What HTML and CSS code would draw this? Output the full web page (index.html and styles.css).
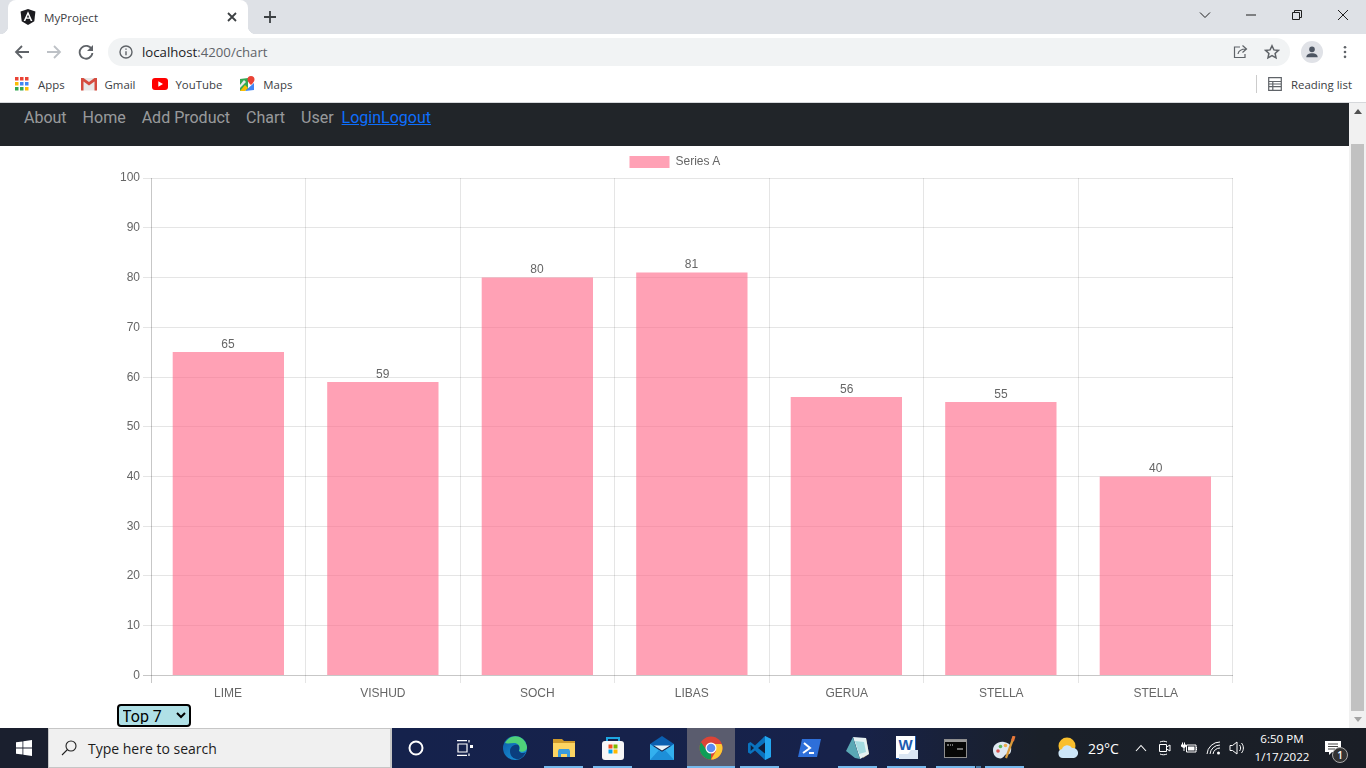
FILE: index.html
```html
<!DOCTYPE html>
<html lang="en">
<head>
<meta charset="utf-8">
<title>MyProject</title>
<link rel="stylesheet" href="styles.css">
</head>
<body>
<header class="chrome">
  <div class="tabstrip">
    <div class="tab">
      <svg class="ico16" viewBox="0 0 16 16"><path fill="#1c1c20" d="M8 0l7.400 2.600-1.100 9.700L8 16l-6.300-3.700L.6 2.600z"/><path fill="#fff" d="M8 2.200L3.600 12h1.700l.9-2.200h3.600l.9 2.200h1.700zM8 5.700l1.200 2.800H6.800z"/></svg>
      <span class="tab-title">MyProject</span>
      <svg class="tab-close" viewBox="0 0 10 10"><path d="M1 1l8 8M9 1l-8 8"/></svg>
    </div>
    <svg class="newtab" viewBox="0 0 12 12"><path d="M6 0v12M0 6h12"/></svg>
    <div class="winctl">
      <span class="winbtn"><svg viewBox="0 0 12 12"><path d="M1 3.500l5 5 5-5"/></svg></span>
      <span class="winbtn"><svg viewBox="0 0 12 12"><path d="M1 6h10"/></svg></span>
      <span class="winbtn"><svg viewBox="0 0 12 12"><path d="M1.500 3.500h7v7h-7zM3.500 3.500v-2h7v7h-2"/></svg></span>
      <span class="winbtn"><svg viewBox="0 0 12 12"><path d="M1 1l10 10M11 1L1 11"/></svg></span>
    </div>
  </div>
  <div class="toolbar">
    <svg class="navico" viewBox="0 0 16 16"><path d="M15 8H2M8 2L2 8l6 6"/></svg>
    <svg class="navico dim" viewBox="0 0 16 16"><path d="M1 8h13M8 2l6 6-6 6"/></svg>
    <svg class="navico" viewBox="0 0 16 16"><path d="M13.800 5.500A6.400 6.400 0 1 0 14.400 9"/><path class="solid" d="M15 1v6H9z"/></svg>
    <div class="omnibox">
      <svg class="info" viewBox="0 0 14 14"><circle cx="7" cy="7" r="6"/><path d="M7 6.200v4M7 3.400v1.400"/></svg>
      <span class="url"><span class="host">localhost</span>:4200/chart</span>
      <svg class="omni-share" viewBox="0 0 16 16"><path d="M8 3H2.500v10.500h10.500V10M6 10c.5-3 3-5 8-5M10.500 1.500L14.500 5l-4 3.500"/></svg>
      <svg class="omni-star" viewBox="0 0 16 16"><path d="M8 1.800l1.900 4.100 4.500.5-3.300 3 .9 4.500L8 11.600l-4 2.300.9-4.500-3.300-3 4.500-.5z"/></svg>
    </div>
    <span class="avatar"><svg viewBox="0 0 16 16"><circle cx="8" cy="5" r="3.200"/><path d="M1.500 14c0-3.200 3-4.600 6.500-4.600s6.500 1.400 6.500 4.600z"/></svg></span>
    <svg class="kebab" viewBox="0 0 4 16"><circle cx="2" cy="2.500" r="1.500"/><circle cx="2" cy="8" r="1.500"/><circle cx="2" cy="13.500" r="1.500"/></svg>
  </div>
  <div class="bookmarks">
    <span class="bm bm-apps">
      <svg class="ico14" viewBox="0 0 14 14"><path fill="#ea4335" d="M0 0h3.500v3.500H0zM5 0h3.500v3.500H5zM10 0h3.500v3.500H10z"/><path fill="#4285f4" d="M5 5h3.500v3.500H5zM10 5h3.500v3.500H10z"/><path fill="#fbbc04" d="M0 5h3.500v3.500H0z"/><path fill="#34a853" d="M0 10h3.500v3.500H0zM5 10h3.500v3.500H5z"/><path fill="#fbbc04" d="M10 10h3.500v3.500H10z"/></svg>
      Apps</span>
    <span class="bm bm-gmail">
      <svg class="ico16" viewBox="0 0 16 14"><path fill="#e8e8e8" d="M1 1h14v12.500H1z"/><path fill="#d54c3f" d="M0 1h2.500l5.500 4 5.500-4H16v12.500h-2.500V4.500L8 8.500l-5.500-4v9H0z"/></svg>
      Gmail</span>
    <span class="bm bm-yt">
      <svg class="ico16" viewBox="0 0 16 12"><rect width="16" height="12" rx="3" fill="#f00"/><path fill="#fff" d="M6.300 3.300L11 6l-4.700 2.700z"/></svg>
      YouTube</span>
    <span class="bm bm-maps">
      <svg class="ico16" viewBox="0 0 16 16"><path fill="#34a853" d="M1 3l8-1v12l-8 1z"/><path fill="#4285f4" d="M6 15l9-1V7z"/><path fill="#fbbc04" d="M1 15l5-6 3 3-3 3z"/><path fill="#e8e8e8" d="M1 9l4-5 2 2-6 6z"/><path fill="#ea4335" d="M12 0a3.500 3.500 0 0 1 3.500 3.500C15.500 6 12 9 12 9S8.500 6 8.500 3.500A3.500 3.500 0 0 1 12 0z"/></svg>
      Maps</span>
    <span class="bm-sep"></span>
    <span class="bm bm-read">
      <svg class="readico" viewBox="0 0 14 14"><path d="M.7.700h12.600v12.600H.7zM.7 4.500h12.600M.7 7h12.600M.7 9.700h12.600M4.800 4.500v8.800"/></svg>
      Reading list</span>
  </div>
</header>

<div class="viewport">
  <main class="page">
    <nav class="navbar">
      <a class="nav-link">About</a>
      <a class="nav-link">Home</a>
      <a class="nav-link">Add Product</a>
      <a class="nav-link">Chart</a>
      <a class="nav-link">User</a>
      <span class="auth"><a href="#login">Login</a><a href="#logout">Logout</a></span>
    </nav>
    <svg class="chart" viewBox="0 146 1349 557">
      <rect class="legend-box" x="629.500" y="156" width="40" height="12"/>
      <text class="lbl" x="675.500" y="165">Series A</text>
      <path class="grid" d="M143 178.500H1233M143 227.500H1233M143 277.500H1233M143 327.500H1233M143 377.500H1233M143 426.500H1233M143 476.500H1233M143 526.500H1233M143 575.500H1233M143 625.500H1233M305.500 178V683M460.500 178V683M614.500 178V683M769.500 178V683M923.500 178V683M1078.500 178V683M1232.500 178V683"/>
      <path class="axis" d="M151.500 178V683M143 675.500H1233"/>
      <g class="ylabels">
        <text x="140" y="181">100</text><text x="140" y="231">90</text><text x="140" y="281">80</text><text x="140" y="331">70</text><text x="140" y="381">60</text><text x="140" y="430">50</text><text x="140" y="480">40</text><text x="140" y="530">30</text><text x="140" y="579">20</text><text x="140" y="629">10</text><text x="140" y="679">0</text>
      </g>
      <g class="bars">
        <rect x="172.700" y="352" width="111.300" height="323"/>
        <rect x="327.200" y="382" width="111.300" height="293"/>
        <rect x="481.700" y="277.500" width="111.300" height="397.500"/>
        <rect x="636.200" y="272.500" width="111.300" height="402.500"/>
        <rect x="790.700" y="397" width="111.300" height="278"/>
        <rect x="945.200" y="402" width="111.300" height="273"/>
        <rect x="1099.700" y="476.500" width="111.300" height="198.500"/>
      </g>
      <g class="centered">
        <text x="228" y="348">65</text><text x="382.800" y="378">59</text><text x="537" y="273">80</text><text x="691.500" y="268">81</text><text x="846.800" y="393">56</text><text x="1001" y="398">55</text><text x="1155.800" y="472">40</text>
        <text x="228" y="697">LIME</text><text x="382.800" y="697">VISHUD</text><text x="537.300" y="697">SOCH</text><text x="691.800" y="697">LIBAS</text><text x="846.800" y="697">GERUA</text><text x="1001.300" y="697">STELLA</text><text x="1155.800" y="697">STELLA</text>
      </g>
    </svg>
    <div class="picker">
      <select class="top-select"><option>Top 7</option><option>Top 5</option><option>Top 3</option></select>
    </div>
  </main>
  <aside class="scrollbar">
    <span class="arrow-up"></span>
    <span class="thumb"></span>
    <span class="arrow-down"></span>
  </aside>
</div>

<footer class="taskbar">
  <span class="start"><svg viewBox="0 0 16 16"><path fill="#fff" d="M0 2.300l6.500-.9v6.200H0zM7.300 1.300L16 0v7.600H7.300zM0 8.400h6.500v6.200L0 13.700zM7.300 8.400H16V16l-8.700-1.200z"/></svg></span>
  <div class="search">
    <svg class="lens" viewBox="0 0 16 16"><circle cx="10" cy="6" r="5"/><path d="M6.500 9.500L1 15"/></svg>
    <span>Type here to search</span>
  </div>
  <div class="apps">
    <span class="app first"><svg class="ic" viewBox="0 0 16 16"><circle cx="8" cy="8" r="6.500" fill="none" stroke="#fff" stroke-width="2"/></svg></span>
    <span class="app wide"><svg class="ic" viewBox="0 0 16 16"><path fill="none" stroke="#fff" stroke-width="1.200" d="M0 .6h10M0 15.400h10M1 4h9v8H1zM12 0v2.500M12 13.500v2.500"/><path fill="#fff" d="M13 5h3v3h-3z"/></svg></span>
    <span class="app"><svg class="ic24" viewBox="0 0 24 24"><defs><linearGradient id="eg" x1="0" y1="0" x2="1" y2="1"><stop offset="0" stop-color="#0c59a4"/><stop offset="1" stop-color="#1b9de2"/></linearGradient></defs><circle cx="12" cy="12" r="12" fill="url(#eg)"/><path fill="#4fd17a" d="M2 7C6-2 21-3 24 11c.3 4-5 6-8 4 2-3 0-8-5-8-4 0-7 1-9 0z"/><path fill="#0b3e7e" d="M7 15c0-4 4-7 8-6 2 1 1 4 1 6 1 2 4 3 7 1-3 6-7 8-10 7-4-1-6-4-6-8z"/></svg></span>
    <span class="app on"><svg class="ic24" viewBox="0 0 24 24"><path fill="#cf9a2b" d="M1 3h9l2 2h11v3H1z"/><path fill="#fcd462" d="M1 7h22v14H1z"/><path fill="#3a9bdc" d="M7 13h10l1 2v6h-3v-3H9v3H6v-6z"/></svg></span>
    <span class="app on"><svg class="ic24" viewBox="0 0 24 24"><path fill="none" stroke="#1ea7e1" stroke-width="2" d="M6 7V2h12v5"/><rect x="1" y="5" width="22" height="19" rx="3" fill="#f7f7f7"/><path fill="#f25022" d="M7.500 8.500h4v4h-4z"/><path fill="#7fba00" d="M12.500 8.500h4v4h-4z"/><path fill="#00a4ef" d="M7.500 13.500h4v4h-4z"/><path fill="#ffb900" d="M12.500 13.500h4v4h-4z"/></svg></span>
    <span class="app"><svg class="ic24" viewBox="0 0 24 24"><path fill="#0a5fb0" d="M0 8l12-8 12 8v2H0z"/><path fill="#33b0ee" d="M0 8l12 8 12-8v16H0z"/><path fill="#e6f3fb" d="M4 9.500h16l-8 5z"/><path fill="#1d8fd8" d="M0 24l9-10 3 2 3-2 9 10z"/></svg></span>
    <span class="app active"><svg class="ic24" viewBox="0 0 24 24"><circle cx="12" cy="12" r="11.500" fill="#db4437"/><path fill="#0f9d58" d="M12 23.500A11.500 11.500 0 0 1 2 6.300L7.500 14l4.500 2z"/><path fill="#fcc934" d="M23.500 12a11.500 11.500 0 0 1-11.500 11.500L17 15l-5-7h10.500q1 2 1 4z"/><circle cx="12" cy="12" r="5.500" fill="#fff"/><circle cx="12" cy="12" r="4.300" fill="#5b8df0"/></svg></span>
    <span class="app on"><svg class="ic24" viewBox="0 0 24 24"><path fill="#0a73bf" d="M17 0l6 3v18l-6 3-10-9.500L2.500 18 0 16.500V7.500L2.500 6 7 9.500z"/><path fill="#23a7f0" d="M17 0l6 3v18l-6 3z"/><path fill="#0f1d3a" d="M17 6.500L10 12l7 5.500zM2.700 9v6L6 12z"/></svg></span>
    <span class="app"><svg class="ic24" viewBox="0 0 24 24"><path fill="#2e6fd9" d="M5 3h19l-4 18H1z"/><path fill="none" stroke="#fff" stroke-width="2" d="M7 7l6 5-7 5M12 17h5"/></svg></span>
    <span class="app on"><svg class="ic24" viewBox="0 0 24 24"><path fill="#c9a36a" d="M20 2l3 16-6 4z"/><path fill="#e6f2f3" d="M7 1l13 1 3 16-9 5z"/><path fill="#5aa8b5" d="M7 1L0 15l9 7 5 1c-2-7-5-14-7-22z"/><path fill="#a5dbe0" d="M9 5l9 1 2 10-7 2z"/></svg></span>
    <span class="app on"><svg class="ic24" viewBox="0 0 24 24"><path fill="#fff" d="M1 0h19v22H1z"/><path fill="#1d5bb0" d="M20 0h1v14h-1zM1 22h14v1H1z"/><path fill="#dbe6f3" d="M4 18h9l3-4h7v9H4z"/><text class="word" x="10.500" y="14">W</text></svg></span>
    <span class="app on split"><svg class="ic-cmd" viewBox="0 0 23 19"><rect x=".5" y=".5" width="22" height="18" fill="#070707" stroke="#8e8e8e"/><path fill="#9a9a9a" d="M1 1h21v2H1z"/><path stroke="#ddd" d="M3 6h2M6 6h1M8 6h1M13 10h6"/></svg></span>
    <span class="app on"><svg class="ic24" viewBox="0 0 24 24"><path fill="#dfe8f1" d="M0 14c0-5 5-9 11-8 6 1 8 4 7 9s-4 2-6 4c-2 3-4 4-7 3-3-1-5-4-5-8z"/><circle cx="5" cy="15" r="1.800" fill="#d9534f"/><circle cx="7.500" cy="10.500" r="1.800" fill="#5cb85c"/><circle cx="12.500" cy="9.500" r="1.800" fill="#f0ad4e"/><path stroke="#d89a3a" stroke-width="2.200" d="M20 3l-7 19"/><path stroke="#e8793a" stroke-width="3" d="M21 0l-1.500 5"/></svg></span>
  </div>
  <div class="tray">
    <svg class="weather" viewBox="0 0 22 22"><circle cx="10" cy="9" r="8.500" fill="#f9bf2d"/><path fill="#cde6f8" d="M6 21a4.500 4.500 0 0 1-1-8.900A5.500 5.500 0 0 1 15 11a5 5 0 0 1 2 10z"/></svg>
    <span class="temp">29°C</span>
    <svg class="chev" viewBox="0 0 12 8"><path d="M1 7l5-5.500L11 7"/></svg>
    <svg class="t-ic meet" viewBox="0 0 16 16"><path d="M2.500 4.500h7v7h-7zM9.500 7l3.500-2v6l-3.500-2M3 2c2-1 5-1 7 0M3 14c2 1 5 1 7 0"/></svg>
    <svg class="t-ic batt" viewBox="0 0 16 16"><path d="M5.500 5h9.500v7H5.500zM15 7.500h1v2h-1"/><path class="solid" d="M7 6.500h6.500v4H7zM1 2.500h1v2h1v-2h1v2h1v2L3.500 8v3H2.500V8L0 6.500v-2h1z"/></svg>
    <svg class="t-ic wifi" viewBox="0 0 16 16"><path d="M1 14A13 13 0 0 1 14 2M4 14A10 10 0 0 1 14 5M7 14A7 7 0 0 1 14 8"/><circle class="solid" cx="12.500" cy="13" r="1.500"/></svg>
    <svg class="t-ic vol" viewBox="0 0 16 16"><path d="M1 5.500h2.500L8 2v12l-4.500-3.500H1zM10.500 5c1.500 1.500 1.500 4.500 0 6M12.500 3c2.500 3 2.500 7 0 10"/></svg>
    <span class="clock"><span>6:50 PM</span><span>1/17/2022</span></span>
    <span class="notif">
      <svg viewBox="0 0 16 14"><path fill="#fff" d="M0 0h16v11H7l-3 3v-3H0z"/><path stroke="#444" d="M3 3h10M3 5.500h10M3 8h7"/></svg>
      <span class="badge">1</span>
    </span>
  </div>
</footer>
</body>
</html>
```
FILE: styles.css
```css
* { box-sizing: border-box; }
html, body { margin: 0; height: 768px; overflow: hidden; }
body { display: flex; flex-direction: column; background: #fff; font-family: "Open Sans", "Liberation Sans", sans-serif; }
svg { display: block; flex: none; }

/* browser chrome */
.chrome { height: 103px; flex: none; background: #fff; border-bottom: 1px solid #d6d8db; }
.tabstrip { height: 34px; background: #dee1e6; display: flex; align-items: center; padding-left: 8px; }
.tab { position: relative; width: 240px; height: 34px; background: #fff; border-radius: 8px 8px 0 0; display: flex; align-items: center; padding: 0 10px 0 12px; }
.tab::before, .tab::after { content: ""; position: absolute; bottom: 0; width: 8px; height: 8px; }
.tab::before { left: -8px; background: radial-gradient(circle at 0 0, #dee1e6 8px, #fff 8.500px); }
.tab::after { right: -8px; background: radial-gradient(circle at 100% 0, #dee1e6 8px, #fff 8.500px); }
.ico16 { width: 16px; height: 16px; }
.tab-title { margin-left: 8px; font-size: 11.600px; color: #3c4043; flex: 1; }
.tab-close { width: 10px; height: 10px; margin-right: 1px; fill: none; stroke: #3c4043; stroke-width: 1.800; }
.newtab { width: 12px; height: 12px; margin-left: 16px; fill: none; stroke: #3c4043; stroke-width: 1.800; }
.winctl { margin-left: auto; display: flex; }
.winbtn { width: 46px; height: 30px; display: flex; align-items: center; justify-content: center; margin-top: -4px; }
.winbtn svg { width: 12px; height: 12px; fill: none; stroke: #1f1f1f; stroke-width: 1; }

.toolbar { height: 34px; display: flex; align-items: center; padding: 2px 0 0 14px; }
.navico { width: 16px; height: 16px; margin-right: 16px; fill: none; stroke: #5f6368; stroke-width: 1.800; }
.navico.dim { stroke: #bdc1c6; }
.navico .solid { fill: #5f6368; stroke: none; }
.omnibox { width: 1182px; height: 28px; margin-left: -2px; border-radius: 14px; background: #f1f3f4; display: flex; align-items: center; padding: 0 10px 0 11px; }
.info { width: 14px; height: 14px; fill: none; stroke: #5f6368; stroke-width: 1.400; }
.url { margin-left: 9px; font-size: 13.200px; color: #5f6368; flex: 1; }
.host { color: #202124; }
.omni-share { width: 16px; height: 16px; fill: none; stroke: #5f6368; stroke-width: 1.200; }
.omni-star { width: 16px; height: 16px; margin-left: 16px; fill: none; stroke: #5f6368; stroke-width: 1.500; }
.avatar { width: 22px; height: 22px; margin-left: 11px; border-radius: 50%; background: #e0e2e7; display: flex; align-items: center; justify-content: center; }
.avatar svg { width: 14px; height: 14px; fill: #4d5562; }
.kebab { width: 4px; height: 14px; margin-left: 20px; fill: #5f6368; }

.bookmarks { height: 34px; display: flex; align-items: center; font-size: 11.400px; color: #3c4043; padding: 0 0 2px 15px; }
.bm { display: flex; align-items: center; }
.ico14 { width: 14px; height: 14px; }
.bm-apps { gap: 9px; }
.bm-gmail { gap: 8px; margin-left: 16px; }
.bm-yt { gap: 8px; margin-left: 16px; }
.bm-maps { gap: 8px; margin-left: 17px; }
.bm-sep { width: 1px; height: 18px; background: #ccc; margin-left: auto; }
.bm-read { margin-left: 11px; margin-right: 14px; gap: 9px; }
.readico { width: 14px; height: 14px; fill: none; stroke: #5f6368; stroke-width: 1.200; }

/* page */
.viewport { flex: 1; min-height: 0; display: flex; }
.page { flex: 1; min-width: 0; display: flex; flex-direction: column; }
.navbar { height: 43px; flex: none; background: #212529; display: flex; align-items: flex-start; padding: 3px 0 0 16px; font-family: Roboto, "Liberation Sans", sans-serif; font-size: 16px; line-height: 24px; }
.nav-link { padding: 0 8px; color: rgba(255, 255, 255, .55); }
.auth a { color: #0d6efd; text-decoration: underline; }
.chart { width: 1349px; height: 557px; flex: none; font-family: "Liberation Sans", Arial, sans-serif; font-size: 12px; fill: #666; will-change: transform; }
.legend-box { fill: rgba(255, 99, 132, .6); }
.grid { fill: none; stroke: rgba(0, 0, 0, .1); stroke-width: 1; }
.axis { fill: none; stroke: rgba(0, 0, 0, .22); stroke-width: 1; }
.ylabels text { text-anchor: end; }
.centered text { text-anchor: middle; }
.bars rect { fill: rgba(255, 99, 132, .6); }
.picker { padding-left: 117px; padding-top: 1px; }
.top-select { display: block; width: 74px; height: 23px; padding: 0 0 1px; border: 2px solid #000; border-radius: 4px; background-color: #b0e0e6; color: #000; font-family: Roboto, "Liberation Sans", sans-serif; font-size: 16px; text-indent: -1px; }

.scrollbar { width: 17px; flex: none; background: #f1f1f1; display: flex; flex-direction: column; align-items: center; }
.arrow-up { width: 0; height: 0; margin-top: 6px; border: 4px solid transparent; border-top: 0; border-bottom: 5px solid #505050; }
.thumb { width: 13px; height: 567px; margin-top: 30px; background: #c1c1c1; }
.arrow-down { width: 0; height: 0; margin-top: 6px; border: 4px solid transparent; border-bottom: 0; border-top: 5px solid #a3a3a3; }

/* taskbar */
.taskbar { height: 40px; flex: none; display: flex; background: linear-gradient(90deg, #1a1f2e 0, #1a1f2e 48px, #15224c 392px, #17224a 850px, #1a2029 1040px, #1a1e26 100%); color: #fff; font-size: 12px; }
.start { width: 48px; display: flex; align-items: center; justify-content: center; }
.start svg { width: 16px; height: 16px; }
.search { width: 344px; background: #f0f0f0; border: 2px solid #c6c6c6; border-width: 1px 2px 1px 1px; display: flex; align-items: center; padding-left: 12px; color: #1c1c1c; font-size: 14px; }
.search span { margin-left: 11px; }
.lens { width: 16px; height: 16px; fill: none; stroke: #222; stroke-width: 1.100; }
.apps { display: flex; width: 637px; }
.app { position: relative; width: 49px; display: flex; align-items: center; justify-content: center; }
.app.first { width: 48px; }
.app.wide { width: 50px; }
.app.active { width: 48px; margin-left: 1px; background: #5a5c6e; }
.app.on::after, .app.active::after { content: ""; position: absolute; left: 5px; right: 5px; bottom: 0; height: 2px; background: #76b9ed; }
.app.active::after { left: 0; right: 0; }
.app.split::before { content: ""; position: absolute; left: 45px; width: 5px; bottom: 0; height: 2px; background: #4a7da8; }
.ic { width: 16px; height: 16px; }
.ic24 { width: 24px; height: 24px; }
.ic-cmd { width: 23px; height: 19px; }
.word { font-family: "Liberation Sans", sans-serif; font-size: 15px; font-weight: 700; fill: #1d5bb0; text-anchor: middle; }
.tray { flex: 1; display: flex; align-items: center; padding-left: 28px; }
.weather { width: 22px; height: 22px; }
.temp { margin-left: 9px; font-size: 14px; width: 37px; }
.chev { width: 12px; height: 8px; margin-left: 10px; fill: none; stroke: #fff; stroke-width: 1.100; }
.t-ic { width: 16px; height: 16px; fill: none; stroke: #fff; stroke-width: 1; }
.t-ic .solid { fill: #fff; stroke: none; }
.meet { margin-left: 10px; }
.batt { margin-left: 8px; }
.wifi { margin-left: 9px; }
.vol { margin-left: 7px; }
.clock { width: 70px; margin-left: 2px; display: flex; flex-direction: column; align-items: center; font-size: 11.600px; line-height: 18px; }
.notif { position: relative; margin-left: 8px; width: 24px; height: 28px; }
.notif svg { width: 16px; height: 14px; margin-top: 7px; }
.badge { position: absolute; left: 7px; top: 13px; width: 16px; height: 16px; border-radius: 50%; border: 1px solid #aaa; background: #333; font-size: 10px; font-weight: 600; line-height: 14px; text-align: center; }
```
